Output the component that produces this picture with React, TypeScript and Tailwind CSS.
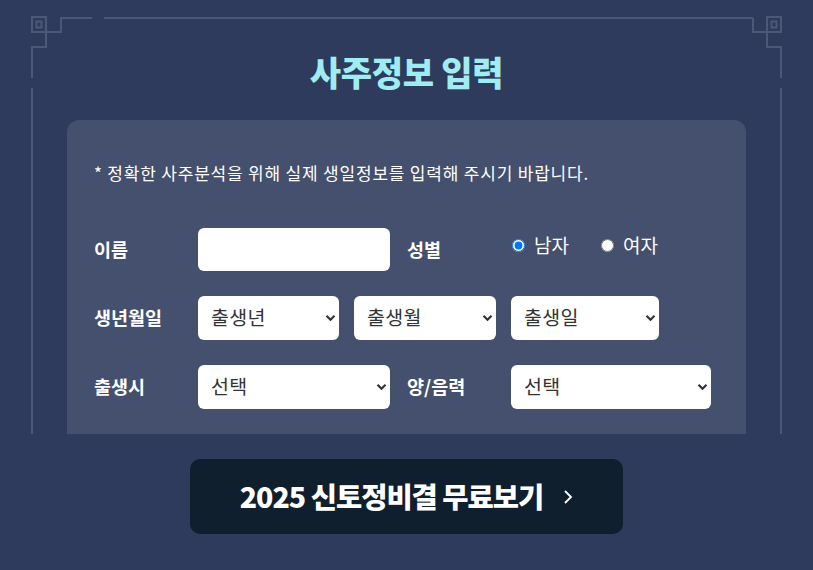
import React, { useState } from 'react';

const font = { fontFamily: '"Noto Sans CJK KR", "Noto Sans", sans-serif' };

// Decorative frame with corner knots
function Frame() {
  const c = '#4b5878';
  return (
    <svg className="pointer-events-none absolute inset-0" width="813" height="434" fill="none" stroke={c} strokeWidth="2">
      {/* left corner */}
      <rect x="32" y="17" width="14" height="15" />
      <rect x="36.5" y="21.5" width="5" height="6" />
      <path d="M46 32 H61 V18 H92" />
      <path d="M104 18 H753" />
      <path d="M46 32 V47 H32 V78" />
      <path d="M32 88 V434" />
      {/* right corner */}
      <rect x="767" y="17" width="14" height="15" />
      <rect x="771.5" y="21.5" width="5" height="6" />
      <path d="M767 32 H753 V18" />
      <path d="M767 32 V47 H781 V78" />
      <path d="M781 88 V434" />
    </svg>
  );
}

function Chevron() {
  return (
    <svg width="11" height="8" viewBox="0 0 11 8" className="shrink-0">
      <path d="M1.5 1.8 L5.5 5.8 L9.5 1.8" stroke="#333" strokeWidth="2.2" fill="none" />
    </svg>
  );
}

function Select({ label, width }: { label: string; width: string }) {
  return (
    <div className={`${width} flex h-[44px] items-center justify-between rounded-md bg-white pl-[13px] pr-[3px]`}>
      <span className="-mt-[3px] text-[19.5px] tracking-[0.3px] text-[#333]">{label}</span>
      <Chevron />
    </div>
  );
}

function Label({ children }: { children: React.ReactNode }) {
  return <div className="w-[104px] shrink-0 text-[18.5px] font-bold text-white">{children}</div>;
}

export default function App() {
  const [gender, setGender] = useState('m');

  return (
    <div className="min-h-[570px] w-[813px] bg-[#2e3b5c]" style={font}>
      <div className="relative h-[434px] overflow-hidden">
        <Frame />
        <h1 className="pt-[52px] text-center text-[34px] font-black leading-[40px] tracking-[-0.3px] text-[#9fedf2]">
          사주정보 입력
        </h1>

        <div className="mx-[67px] mt-[28px] h-[400px] rounded-t-xl bg-[#44506d] pl-[27px] pt-[41px]">
          <p className="text-[17px] leading-6 tracking-[0.8px] text-white">
            * 정확한 사주분석을 위해 실제 생일정보를 입력해 주시기 바랍니다.
          </p>

          <div className="mt-[43px] flex flex-col gap-[25px]">
            <div className="flex items-center">
              <Label>이름</Label>
              <input className="h-[43px] w-[192px] rounded-md bg-white px-3 text-[#333] outline-none" />
              <div className="ml-[17px]">
                <Label>성별</Label>
              </div>
              <div className="-mt-[8px] flex items-center text-[19px] text-white">
                <label className="flex items-center">
                  <input
                    type="radio"
                    name="g"
                    checked={gender === 'm'}
                    onChange={() => setGender('m')}
                    className="m-0 ml-[1px] h-[13px] w-[13px]"
                  />
                  <span className="ml-[9px]">남자</span>
                </label>
                <label className="ml-[32px] flex items-center">
                  <input
                    type="radio"
                    name="g"
                    checked={gender === 'f'}
                    onChange={() => setGender('f')}
                    className="m-0 h-[13px] w-[13px]"
                  />
                  <span className="ml-[9px]">여자</span>
                </label>
              </div>
            </div>

            <div className="flex items-center">
              <Label>생년월일</Label>
              <div className="flex gap-[15px]">
                <Select label="출생년" width="w-[141px]" />
                <Select label="출생월" width="w-[142px]" />
                <Select label="출생일" width="w-[148px]" />
              </div>
            </div>

            <div className="flex items-center">
              <Label>출생시</Label>
              <Select label="선택" width="w-[192px]" />
              <div className="ml-[17px]">
                <Label>양/음력</Label>
              </div>
              <Select label="선택" width="w-[200px]" />
            </div>
          </div>
        </div>
      </div>

      <div className="flex justify-center pt-[25px]">
        <button className="flex h-[75px] w-[433px] items-center justify-center rounded-[10px] bg-[#0f1f2e] text-white">
          <span className="text-[28.5px] font-black tracking-[-1px]">2025 신토정비결 무료보기</span>
          <svg width="10" height="16" viewBox="0 0 10 16" className="ml-[20px]">
            <path d="M2 2 L8 8 L2 14" stroke="#fff" strokeWidth="1.8" fill="none" />
          </svg>
        </button>
      </div>
    </div>
  );
}
